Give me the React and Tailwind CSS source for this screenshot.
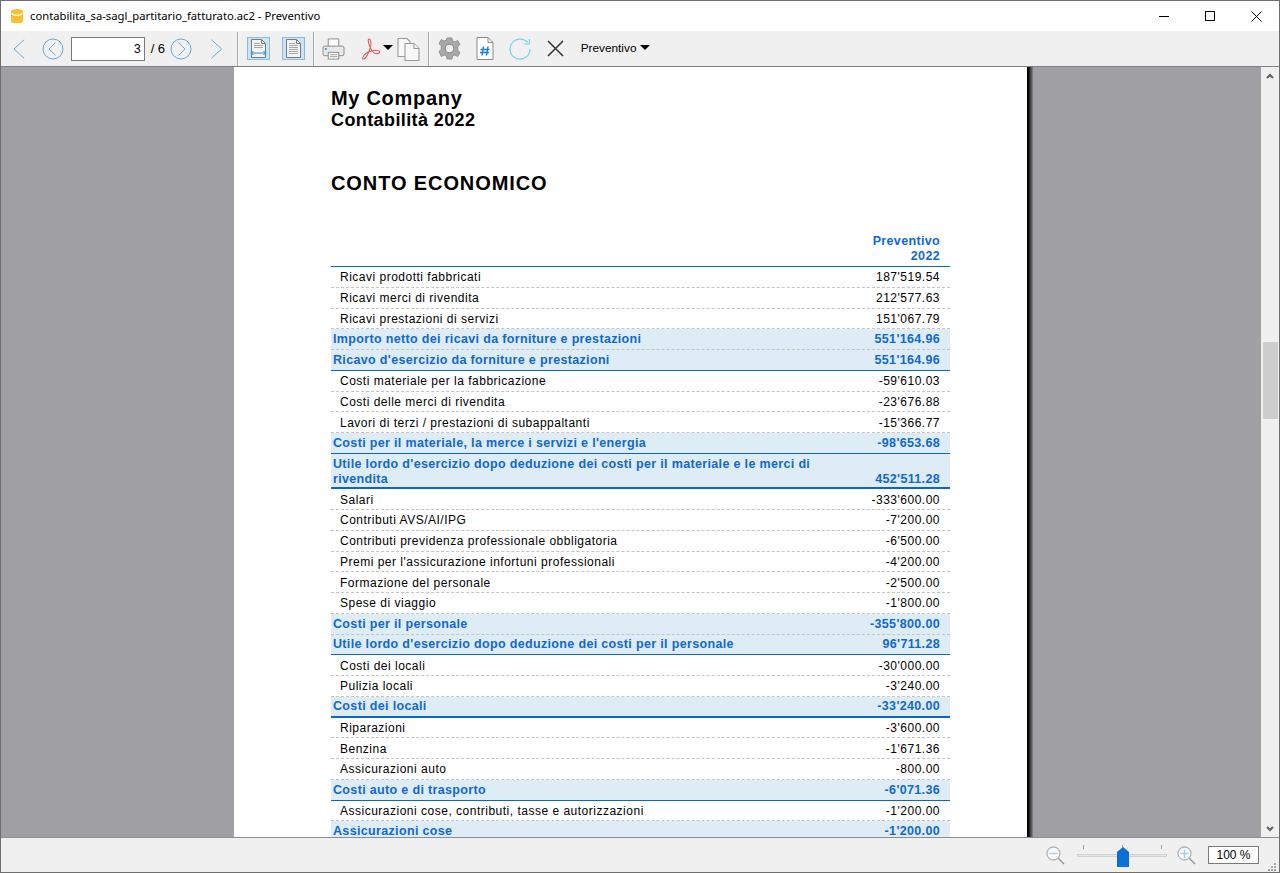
const rows = [
  ["Ricavi prodotti fabbricati", "187'519.54"],
  ["Ricavi merci di rivendita", "212'577.63"],
  ["Ricavi prestazioni di servizi", "151'067.79"],
  ["Importo netto dei ricavi da forniture e prestazioni", "551'164.96", "total"],
  ["Ricavo d'esercizio da forniture e prestazioni", "551'164.96", "blue"],
  ["Costi materiale per la fabbricazione", "-59'610.03"],
  ["Costi delle merci di rivendita", "-23'676.88"],
  ["Lavori di terzi / prestazioni di subappaltanti", "-15'366.77"],
  ["Costi per il materiale, la merce i servizi e l'energia", "-98'653.68", "blue"],
  ["Utile lordo d'esercizio dopo deduzione dei costi per il materiale e le merci di rivendita", "452'511.28", "thick"],
  ["Salari", "-333'600.00"],
  ["Contributi AVS/AI/IPG", "-7'200.00"],
  ["Contributi previdenza professionale obbligatoria", "-6'500.00"],
  ["Premi per l'assicurazione infortuni professionali", "-4'200.00"],
  ["Formazione del personale", "-2'500.00"],
  ["Spese di viaggio", "-1'800.00"],
  ["Costi per il personale", "-355'800.00", "total"],
  ["Utile lordo d'esercizio dopo deduzione dei costi per il personale", "96'711.28", "blue"],
  ["Costi dei locali", "-30'000.00"],
  ["Pulizia locali", "-3'240.00"],
  ["Costi dei locali", "-33'240.00", "thick"],
  ["Riparazioni", "-3'600.00"],
  ["Benzina", "-1'671.36"],
  ["Assicurazioni auto", "-800.00"],
  ["Costi auto e di trasporto", "-6'071.36", "blue"],
  ["Assicurazioni cose, contributi, tasse e autorizzazioni", "-1'200.00"],
  ["Assicurazioni cose", "-1'200.00", "total"],
];

const Row = ({ label, amount, kind }) => {
  if (!kind) {
    return (
      <div className="flex h-[20.75px] items-center justify-between border-b border-dashed border-[#c4c4c4] pl-[9px] pr-[10px] pt-[1px] text-[12px] tracking-[0.5px] text-black">
        <span>{label}</span>
        <span>{amount}</span>
      </div>
    );
  }
  const double = label.length > 70;
  const border =
    kind === "thick"
      ? "border-b-2 border-[#0a68c4]"
      : kind === "blue"
        ? "border-b border-[#0a68c4]"
        : "border-b border-dashed border-[#c4c4c4]";
  return (
    <div
      className={`flex items-end justify-between bg-[#deedf5] pl-[2px] pr-[10px] text-[12.5px] font-bold tracking-[0.34px] text-[#1168cf] ${border} ${
        double ? "h-[35.5px] leading-[15px]" : "h-[20.75px] leading-[19px]"
      }`}
    >
      <span className="w-[490px]">{label}</span>
      <span>{amount}</span>
    </div>
  );
};

const TitleIcon = () => (
  <svg width="14" height="16" viewBox="0 0 14 16">
    <path d="M1 3.500C1 2 3.500 1 7 1s6 1 6 2.500V13c0 1.300-1 2-2 2H3c-1 0-2-.7-2-2z" fill="#fbc02d" />
    <path d="M1.500 5.500C3 7 5 7.300 7 7.300c2.500 0 4.500-.8 5.500-2" fill="none" stroke="#fff" strokeWidth="1.300" />
  </svg>
);

const Chevron = ({ dir = "left", size = 22 }) => (
  <svg width={size * 0.62} height={size} viewBox="0 0 14 22" fill="none" stroke="#6aaade" strokeWidth="1">
    <path d={dir === "left" ? "M12.500 1.500 2 11l10.500 9.500" : "M1.500 1.500 12 11 1.500 20.500"} />
  </svg>
);

const CircleNav = ({ dir }) => (
  <svg width="22" height="22" viewBox="0 0 22 22" fill="none" stroke="#6aaade" strokeWidth="1">
    <circle cx="11" cy="11" r="10" />
    <path d={dir === "left" ? "M13.500 4.500 7 11l6.500 6.500" : "M8.500 4.500 15 11l-6.500 6.500"} />
  </svg>
);

const DocButton = ({ arrow }) => (
  <div className="flex h-[23px] w-[23px] items-center justify-center border border-[#86bde6] bg-[#cde4f5]">
    <svg width="19" height="19" viewBox="0 0 19 19" fill="none">
      <path d="M2.500.500h10l4 4v14h-14z" fill="#f4f4f4" stroke="#7a7a7a" />
      <path d="M12.500.500v4h4" stroke="#7a7a7a" />
      {arrow ? (
        <>
          <path d="M5 4.500h6M5 6.500h9M5 8.500h9" stroke="#a8a8a8" />
          <path d="M2 14h15M2.500 11.500v5M16.500 11.500v5" stroke="#3a8dd0" strokeWidth="1.200" />
          <path d="M4.500 12l-2 2 2 2M14.500 12l2 2-2 2" stroke="#3a8dd0" />
        </>
      ) : (
        <path d="M5 4.500h6M5 6.500h9M5 8.500h9M5 10.500h9M5 12.500h9M5 14.500h9" stroke="#a8a8a8" />
      )}
    </svg>
  </div>
);

const Printer = () => (
  <svg width="23" height="24" viewBox="0 0 24 24" fill="none" stroke="#8a8a8a">
    <path d="M6.500 9V1.500h11V9" fill="#fff" />
    <rect x="1" y="9" width="22" height="10" rx="2" fill="#e8e8e8" />
    <rect x="6.500" y="15.500" width="11" height="7" fill="#fff" />
    <path d="M8 18h8M8 20h8" stroke="#9a9a9a" />
    <rect x="3" y="11" width="2" height="2" fill="#3a9ad9" stroke="none" />
  </svg>
);

const Pdf = () => (
  <svg width="21" height="24" viewBox="0 0 22 24" fill="none" stroke="#ef5050" strokeWidth="1.100">
    <path d="M8.500 1.500c-1.500 0-1.200 3.500 1 8.500 1.800 4 4 7 6.500 7 3 0 5-2.300 2.500-3.300-3-1.200-11 .2-14 3.300-2.500 2.800-3.500 5.500-2 5.500 2.500 0 6.500-7.500 7.500-13 .6-3.500 .5-8-1.500-8z" />
  </svg>
);

const Copy = () => (
  <svg width="23" height="24" viewBox="0 0 23 24" fill="#f8f8f8" stroke="#9a9a9a" strokeWidth="1.100">
    <path d="M1 1.500h9l3 3v15H1z" />
    <path d="M8 6.500h9l5 5v12H8z" />
    <path d="M17 6.500v5h5" />
  </svg>
);

const Gear = () => (
  <svg width="23" height="23" viewBox="0 0 24 24">
    <path
      d="M9.500 1h5l.8 3.200 2.300 1 2.900-1.600 2.500 4.300-2.400 2.200v3.800l2.400 2.200-2.500 4.300-2.900-1.600-2.300 1-.8 3.200h-5l-.8-3.200-2.300-1-2.900 1.600L1 15.100l2.400-2.200V9.100L1 6.900l2.500-4.300 2.900 1.600 2.300-1z"
      fill="#a8a8a8"
      stroke="#929292"
    />
    <circle cx="12" cy="12" r="4.500" fill="#f0f0f0" stroke="#808080" />
  </svg>
);

const HashDoc = () => (
  <svg width="18" height="23" viewBox="0 0 18 23" fill="#fff">
    <path d="M1 .500h11l5 5v17H1z" stroke="#8a8a8a" />
    <path d="M12 .500v5h5" fill="none" stroke="#8a8a8a" />
    <path d="M7.500 9.500 6 18.500M12 9.500l-1.500 9M4.500 12.500h9M4 15.500h9" fill="none" stroke="#1f7fd1" strokeWidth="1.500" />
  </svg>
);

const Refresh = () => (
  <svg width="22" height="22" viewBox="0 0 22 22" fill="none" stroke="#78d3e8" strokeWidth="1.200">
    <path d="M18.500 4.500A10 10 0 1 0 21 11" />
    <path d="M20.500 1v5h-5" />
  </svg>
);

const Close = () => (
  <svg width="17" height="17" viewBox="0 0 17 17" fill="none" stroke="#333" strokeWidth="1.500">
    <path d="M1 1l15 15M16 1 1 16" />
  </svg>
);

const Caret = () => <div className="h-0 w-0 border-x-[5px] border-t-[5px] border-x-transparent border-t-black" />;

const Divider = () => <div className="h-[34px] w-[2px] border-l border-[#a8a8a8] bg-[#fafafa]" />;

const Magnifier = ({ plus }) => (
  <svg width="19" height="19" viewBox="0 0 19 19" fill="none">
    <path d="M11.500 11.500 18 18" stroke="#909090" strokeWidth="1.200" />
    <circle cx="7.500" cy="7.500" r="6.500" fill="#fff" stroke="#b4b4b4" strokeWidth="1.300" />
    <path d="M3.500 7.500h8" stroke="#a9cfe9" strokeWidth="1.600" />
    {plus && <path d="M7.500 3.500v8" stroke="#a9cfe9" strokeWidth="1.600" />}
  </svg>
);

const Grip = () => (
  <svg width="10" height="10" viewBox="0 0 10 10" fill="#a8a8a8">
    <rect x="7" y="1" width="2" height="2" />
    <rect x="4" y="4" width="2" height="2" />
    <rect x="7" y="4" width="2" height="2" />
    <rect x="1" y="7" width="2" height="2" />
    <rect x="4" y="7" width="2" height="2" />
    <rect x="7" y="7" width="2" height="2" />
  </svg>
);

export default function App() {
  return (
    <div
      className="flex h-[873px] w-[1280px] flex-col overflow-hidden border border-[#6e6e6e] bg-white text-black"
      style={{ fontFamily: '"Liberation Sans", Arial, sans-serif' }}
    >
      {/* TITLE BAR */}
      <div className="flex h-[30px] shrink-0 items-center bg-white pl-[9px] text-[12px]">
        <TitleIcon />
        <span className="ml-[6px] font-['Noto_Sans',sans-serif] text-[11.25px]">contabilita_sa-sagl_partitario_fatturato.ac2 - Preventivo</span>
        <div className="ml-auto flex h-full items-center">
          <div className="flex w-[46px] justify-center">
            <div className="h-px w-[10px] bg-black" />
          </div>
          <div className="flex w-[46px] justify-center">
            <div className="h-[10px] w-[10px] border border-black" />
          </div>
          <div className="flex w-[46px] justify-center">
            <svg width="11" height="11" viewBox="0 0 11 11" fill="none" stroke="#000">
              <path d="M.500.500l10 10M10.500.500l-10 10" />
            </svg>
          </div>
        </div>
      </div>

      {/* TOOLBAR */}
      <div className="flex h-[36px] shrink-0 items-center border-b border-[#7e8288] bg-[#f0f0f0] pl-[11px]">
        <Chevron dir="left" />
        <div className="ml-[16px]">
          <CircleNav dir="left" />
        </div>
        <div className="ml-[7px] flex h-[24px] w-[74px] items-center justify-end border border-[#7a7a7a] bg-white pr-[3px] text-[12px]">3</div>
        <span className="ml-[6px] text-[13px]">/ 6</span>
        <div className="ml-[5px]">
          <CircleNav dir="right" />
        </div>
        <div className="ml-[18px]">
          <Chevron dir="right" />
        </div>
        <div className="ml-[13px]">
          <Divider />
        </div>
        <div className="ml-[8px]">
          <DocButton arrow />
        </div>
        <div className="ml-[12px]">
          <DocButton />
        </div>
        <div className="ml-[8px]">
          <Divider />
        </div>
        <div className="ml-[7px]">
          <Printer />
        </div>
        <div className="ml-[16px]">
          <Pdf />
        </div>
        <div className="ml-[1px] mb-[2px]">
          <Caret />
        </div>
        <div className="ml-[4px]">
          <Copy />
        </div>
        <div className="ml-[8px]">
          <Divider />
        </div>
        <div className="ml-[8px]">
          <Gear />
        </div>
        <div className="ml-[15px]">
          <HashDoc />
        </div>
        <div className="ml-[15px]">
          <Refresh />
        </div>
        <div className="ml-[16px]">
          <Close />
        </div>
        <span className="ml-[17px] text-[11.8px]">Preventivo</span>
        <div className="ml-[4px] mb-[2px]">
          <Caret />
        </div>
      </div>

      {/* VIEW AREA */}
      <div className="flex min-h-0 flex-1 bg-[#a09fa4]">
        <div className="flex min-w-0 flex-1 overflow-hidden pl-[233px]">
          <div className="h-[771px] w-[793px] shrink-0 overflow-hidden bg-white pl-[97px] pt-[20px]">
            <div className="w-[619px]">
              <h1 className="text-[20px] font-bold leading-[23px] tracking-[0.7px]">My Company</h1>
              <h2 className="text-[18px] font-bold leading-[21px] tracking-[0.4px]">Contabilità 2022</h2>
              <h3 className="mt-[40px] text-[20px] font-bold leading-[24px] tracking-[0.9px]">CONTO ECONOMICO</h3>
              <div className="mt-[39px] border-b border-[#0a68c4] pb-[2px] pr-[10px] text-right text-[12.5px] font-bold leading-[15px] tracking-[0.34px] text-[#1168cf]">
                <div>Preventivo</div>
                <div>2022</div>
              </div>
              {rows.map((row, index) => (
                <Row key={index} label={row[0]} amount={row[1]} kind={row[2]} />
              ))}
            </div>
          </div>
          <div className="h-full w-[6px] shrink-0 bg-gradient-to-r from-black to-[#8a898d]" />
        </div>
        {/* SCROLLBAR */}
        <div className="flex w-[18px] shrink-0 flex-col items-center bg-[#f0f0f0]">
          <div className="flex h-[17px] items-center text-[#606060]">
            <svg width="8" height="6" viewBox="0 0 8 6" fill="none" stroke="#606060" strokeWidth="2">
              <path d="M1 5l3-3 3 3" />
            </svg>
          </div>
          <div className="mt-[258px] h-[77px] w-[15px] bg-[#cdcdcd]" />
          <div className="mt-auto flex h-[17px] items-center">
            <svg width="8" height="6" viewBox="0 0 8 6" fill="none" stroke="#606060" strokeWidth="2">
              <path d="M1 1l3 3 3-3" />
            </svg>
          </div>
        </div>
      </div>

      {/* STATUS BAR */}
      <div className="flex h-[35px] shrink-0 items-center justify-end border-t border-[#8a8d92] bg-[#f0f0f0]">
        <Magnifier />
        <div className="relative ml-[12px] h-[3px] w-[90px] border border-[#d0d4d0] bg-[#e6e6e6]">
          <div className="absolute -top-[10px] left-[5px] h-[4px] w-px bg-[#a0a090]" />
          <div className="absolute -top-[10px] left-[44px] h-[4px] w-px bg-[#a0a090]" />
          <div className="absolute -top-[10px] left-[83px] h-[4px] w-px bg-[#a0a090]" />
          <svg className="absolute -top-[8px] left-[39px]" width="12" height="20" viewBox="0 0 12 20">
            <path d="M0 5l6-5 6 5v15H0z" fill="#0a6fd6" />
          </svg>
        </div>
        <div className="ml-[10px]">
          <Magnifier plus />
        </div>
        <div className="ml-[12px] flex h-[18px] w-[51px] items-center justify-center border border-[#7a7a7a] bg-white text-[12px]">100 %</div>
        <div className="ml-[8px] mt-[24px] mr-[2px]">
          <Grip />
        </div>
      </div>
    </div>
  );
}
